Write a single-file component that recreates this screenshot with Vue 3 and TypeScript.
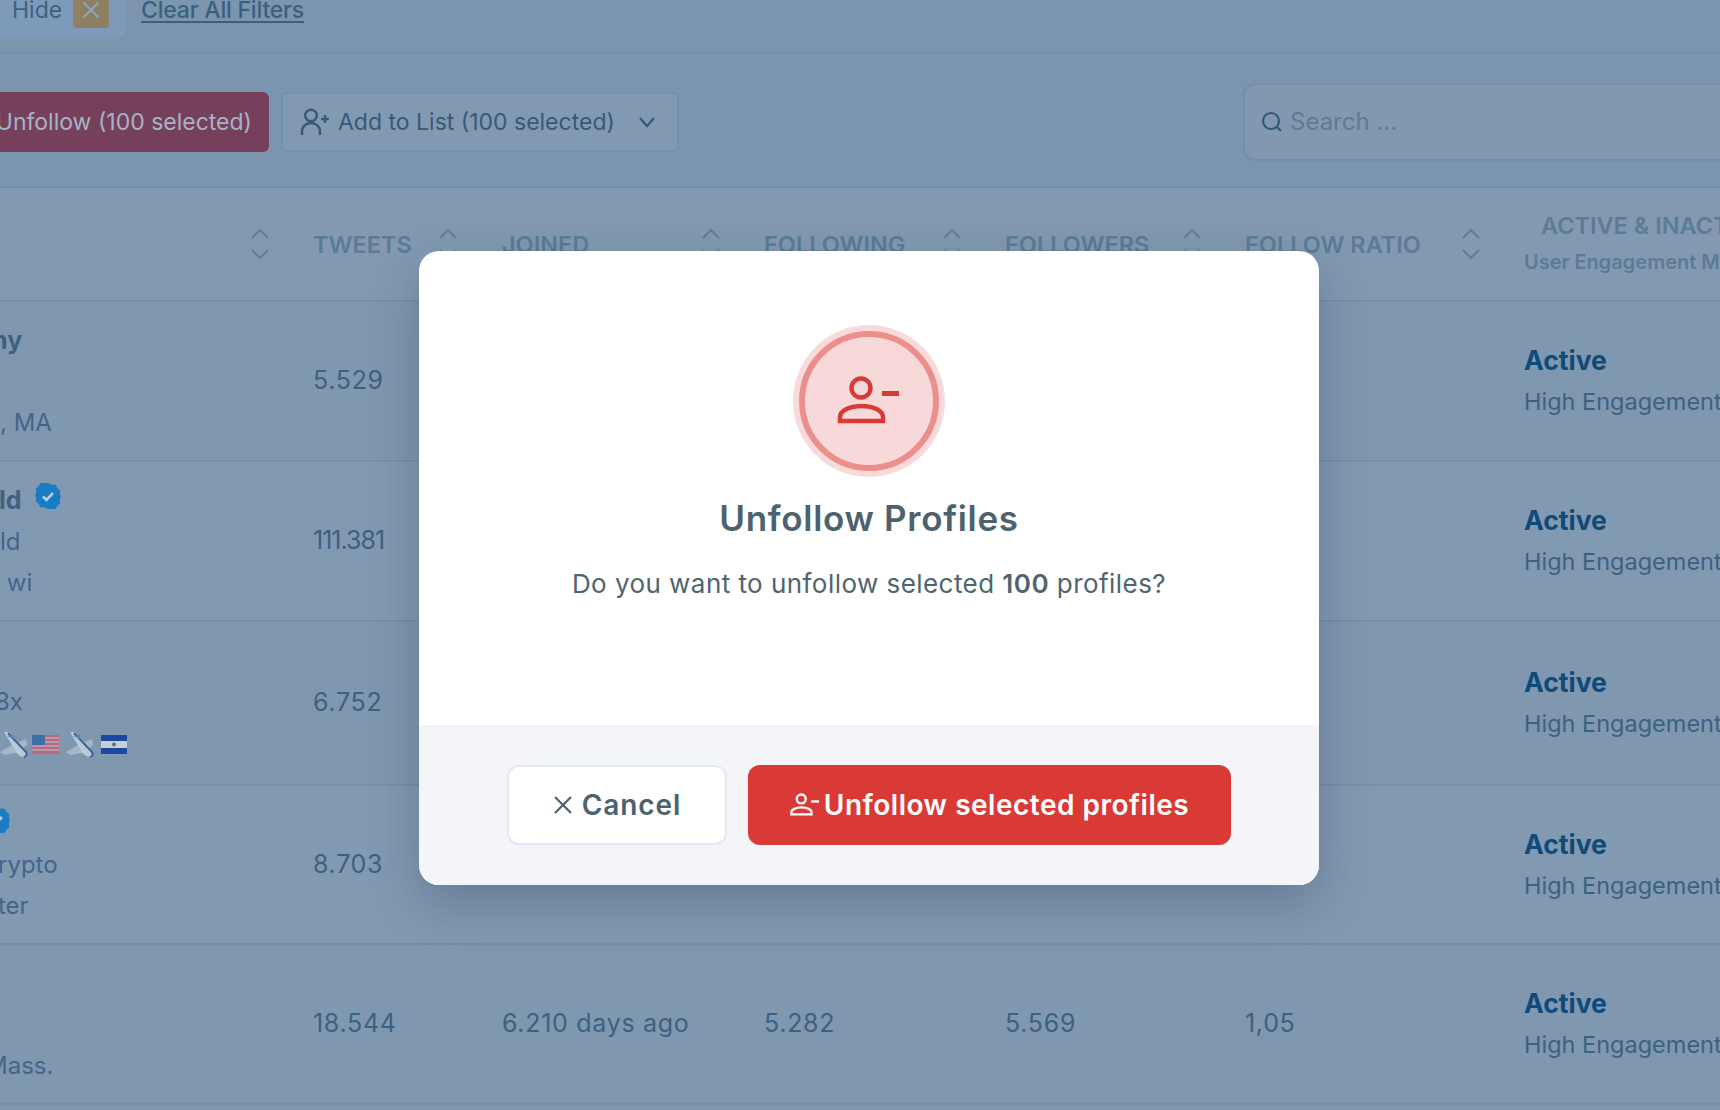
<script setup lang="ts">
interface Row {
  height: number;
  name: string;
  nameShift?: number;
  badge?: boolean;
  handle: string;
  bio: string;
  shift?: number;
  flags?: boolean;
  tweets: string;
  tracking?: number;
  joined?: string;
  following?: string;
  followers?: string;
  ratio?: string;
}

const headers = [
  { label: 'TWEETS', width: 189, sort: 125 },
  { label: 'JOINED', width: 262, sort: 199 },
  { label: 'FOLLOWING', width: 241, sort: 178 },
  { label: 'FOLLOWERS', width: 240, sort: 177 },
  { label: 'FOLLOW RATIO', width: 279, sort: 216 }
];

const rows: Row[] = [
  { height: 160, name: 'ny', nameShift: -8, handle: '', bio: ', MA', tweets: '5.529' },
  { height: 160, name: 'ld', badge: true, handle: 'ld', bio: ' wi', tweets: '111.381', tracking: -1 },
  { height: 164, name: '', handle: '8x', bio: '', shift: -5, flags: true, tweets: '6.752' },
  { height: 159, name: '', badge: true, handle: 'rypto', bio: 'ter', shift: -2, tweets: '8.703' },
  {
    height: 160,
    name: '',
    handle: '',
    bio: 'Mass.',
    shift: -14,
    tweets: '18.544',
    joined: '6.210 days ago',
    following: '5.282',
    followers: '5.569',
    ratio: '1,05'
  }
];
</script>

<template>
  <div class="page">
    <div class="filters">
      <div class="chip">
        <span class="chip-label">Hide</span>
        <span class="chip-close">
          <svg width="18" height="18" viewBox="0 0 18 18" fill="none" stroke="currentColor" stroke-width="2">
            <path d="M1.500 1.500l15 15M16.500 1.500l-15 15" />
          </svg>
        </span>
      </div>
      <a class="clear">Clear All Filters</a>
    </div>

    <div class="toolbar">
      <button class="btn-red">Unfollow (100 selected)</button>
      <button class="btn-list">
        <svg width="30" height="28" viewBox="0 0 30 28" fill="none" stroke="currentColor" stroke-width="2.400">
          <circle cx="11" cy="7.500" r="5.800" />
          <path d="M2 27v-3.500c0-5 4-8.500 9-8.500s9 3.500 9 8.500V27M21 11h8M25 7v8" />
        </svg>
        <span>Add to List (100 selected)</span>
        <svg class="chevron" width="18" height="12" viewBox="0 0 18 12" fill="none" stroke="currentColor" stroke-width="2.200">
          <path d="M2 2l7 8 7-8" />
        </svg>
      </button>
      <div class="search">
        <svg width="22" height="22" viewBox="0 0 22 22" fill="none" stroke="#2f5a7c" stroke-width="2.200">
          <circle cx="10" cy="10" r="8" />
          <path d="M16 16l4 4" />
        </svg>
        <span>Search ...</span>
      </div>
    </div>

    <div class="table-head">
      <div class="name-col">
        <svg class="sort" width="20" height="30" viewBox="0 0 20 30" fill="none" stroke="currentColor" stroke-width="2">
          <path d="M2 9l8-8 8 8M2 21l8 8 8-8" />
        </svg>
      </div>
      <div v-for="h in headers" :key="h.label" class="head-cell" :style="{ width: h.width + 'px' }">
        <span>{{ h.label }}</span>
        <svg class="sort" :style="{ left: h.sort + 'px' }" width="20" height="30" viewBox="0 0 20 30" fill="none" stroke="currentColor" stroke-width="2">
          <path d="M2 9l8-8 8 8M2 21l8 8 8-8" />
        </svg>
      </div>
      <div class="head-active">
        <div class="head-active-title">ACTIVE &amp; INACTIVE</div>
        <div class="head-active-sub">User Engagement Metrics</div>
      </div>
    </div>

    <div v-for="(row, i) in rows" :key="i" class="row" :class="{ alt: i % 2 === 0 }" :style="{ height: row.height + 'px' }">
      <div class="name-col name-cell">
        <div class="line strong">
          <svg v-if="row.badge" class="badge" :class="{ 'badge-left': !row.name }" width="26" height="26" viewBox="0 0 26 26">
            <path fill="#1a7cc4" d="M13 0l3.500 1.800 3.900-.3 2 3.400 3 2.500-.6 3.900L26 13l-1.200 3.400.6 3.900-3 2.500-2 3.400-3.900-.3L13 26l-3.500-1.800-3.900.3-2-3.400-3-2.500.6-3.900L0 13l1.200-3.400-.6-3.900 3-2.500 2-3.400 3.900.3z" />
            <path d="M8 13.500l3.500 3.500 6.500-7" fill="none" stroke="#b9cfe2" stroke-width="2.600" />
          </svg>
          <span v-if="row.name" class="name-text" :style="{ marginLeft: (row.nameShift ?? -1) + 'px' }">{{ row.name }}</span>
        </div>
        <div class="line muted" :style="{ marginLeft: (row.shift ?? 0) + 'px' }">{{ row.handle }}</div>
        <div v-if="row.flags" class="line flags">
          <svg width="127" height="28" viewBox="0 -1 127 28">
            <defs>
              <g id="plane">
                <path d="M0 21l14-8 12-5 1 6-11 8-12 2z" fill="#a6b6c6" />
                <path d="M4 1h5l17 19q2 5-1 6-6 0-9-5z" fill="#bcc9d6" />
                <path d="M8 2l18 19q2 4-2 5" fill="none" stroke="#3b6296" stroke-width="2" />
                <path d="M7 5l7-1v4z" fill="#5d83ab" />
              </g>
            </defs>
            <use href="#plane" />
            <use href="#plane" x="66" />
            <rect x="32" y="4" width="27" height="19" fill="#b56a80" />
            <path d="M32 7h27M32 11h27M32 15h27M32 19h27" stroke="#bcc6d2" stroke-width="1.200" />
            <rect x="32" y="4" width="13" height="10" fill="#3d6ea5" />
            <rect x="101" y="4" width="26" height="6" fill="#1d47a0" />
            <rect x="101" y="10" width="26" height="7" fill="#c5d0da" />
            <rect x="101" y="17" width="26" height="6" fill="#1d47a0" />
            <circle cx="114" cy="13.500" r="2" fill="#5a7a55" />
          </svg>
        </div>
        <div v-else class="line muted" :style="{ marginLeft: (row.shift ?? 0) + 'px' }">{{ row.bio }}</div>
      </div>
      <div class="cell" :style="{ width: headers[0].width + 'px', letterSpacing: (row.tracking ?? 0.7) + 'px' }">{{ row.tweets }}</div>
      <div class="cell" :style="{ width: headers[1].width + 'px' }">{{ row.joined }}</div>
      <div class="cell" :style="{ width: headers[2].width + 'px' }">{{ row.following }}</div>
      <div class="cell" :style="{ width: headers[3].width + 'px' }">{{ row.followers }}</div>
      <div class="cell" :style="{ width: headers[4].width + 'px' }">{{ row.ratio }}</div>
      <div class="status">
        <div class="status-title">Active</div>
        <div class="status-sub">High Engagement</div>
      </div>
    </div>

    <div class="overlay">
      <div class="modal">
        <div class="modal-body">
          <div class="icon-ring">
            <svg width="64" height="52" viewBox="0 0 64 52" fill="none" stroke="#d93a35" stroke-width="4.400">
              <circle cx="24" cy="13" r="9.500" />
              <path d="M3 46v-4c0-6 9-11 21.500-11S46 36 46 42v4z" />
              <rect x="45" y="16" width="17" height="5" fill="#d93a35" stroke="none" />
            </svg>
          </div>
          <h2 class="modal-title">Unfollow Profiles</h2>
          <p class="modal-text">Do you want to unfollow selected <b>100</b> profiles?</p>
        </div>
        <div class="modal-footer">
          <button class="btn-cancel">
            <svg width="20" height="20" viewBox="0 0 20 20" fill="none" stroke="currentColor" stroke-width="2.200">
              <path d="M2 2l16 16M18 2L2 18" />
            </svg>
            Cancel
          </button>
          <button class="btn-confirm">
            <svg width="30" height="26" viewBox="0 0 64 52" fill="none" stroke="#fff" stroke-width="5">
              <circle cx="24" cy="13" r="9.500" />
              <path d="M3 46v-4c0-6 9-11 21.500-11S46 36 46 42v4z" />
              <rect x="45" y="16" width="17" height="5" fill="#fff" stroke="none" />
            </svg>
            Unfollow selected profiles
          </button>
        </div>
      </div>
    </div>
  </div>
</template>

<style>
html,
body {
  margin: 0;
  background: #7e96ae;
}
</style>

<style scoped>
* {
  box-sizing: border-box;
}

.page {
  position: relative;
  width: 1720px;
  height: 1110px;
  overflow: hidden;
  font-family: Inter, "Noto Sans", sans-serif;
  font-size: 24px;
  color: #3d6180;
  background: #7e96ae;
}

.filters {
  height: 54px;
  display: flex;
  align-items: flex-end;
  gap: 16px;
  padding-bottom: 16px;
  background: #7b95ae;
  border-bottom: 2px solid #7290aa;
  font-size: 23px;
}

.chip {
  height: 60px;
  width: 125px;
  flex: none;
  display: flex;
  align-items: flex-end;
  justify-content: space-between;
  padding: 0 16px 8px 12px;
  background: #7d9abb;
  border-radius: 0 6px 6px 0;
  color: #3f6080;
}

.chip-label {
  line-height: 30px;
  margin-bottom: 3px;
}

.chip-close {
  width: 36px;
  height: 36px;
  flex: none;
  display: flex;
  align-items: center;
  justify-content: center;
  background: #8f7f63;
  border-radius: 4px;
  color: #8ba6c0;
}

.clear {
  margin-bottom: 11px;
  color: #3a5f80;
  font-weight: 500;
  letter-spacing: -0.2px;
  text-decoration: underline;
  text-decoration-thickness: 2px;
  text-underline-offset: 3px;
  line-height: 30px;
}

.toolbar {
  height: 134px;
  display: flex;
  align-items: center;
  gap: 12px;
  padding-top: 3px;
  background: #7b95ae;
  border-bottom: 2px solid #7290aa;
  font-size: 23px;
}

.btn-red,
.btn-list {
  height: 60px;
  border-radius: 6px;
  font: inherit;
  display: flex;
  align-items: center;
  white-space: nowrap;
}

.btn-red {
  width: 299px;
  margin-left: -30px;
  flex: none;
  justify-content: flex-end;
  padding: 0 17px 0 0;
  border: none;
  background: #77405a;
  color: #a5b3c8;
}

.btn-list {
  width: 398px;
  flex: none;
  gap: 8px;
  padding: 0 21px 0 17px;
  border: 2px solid #7390ac;
  background: #8199b1;
  color: #36597a;
}

.chevron {
  margin-left: auto;
}

.search {
  width: 600px;
  height: 78px;
  margin-left: 552px;
  flex: none;
  display: flex;
  align-items: center;
  gap: 7px;
  padding-left: 16px;
  border: 2px solid #748fab;
  border-radius: 12px;
  background: #8198b0;
  color: #5f7a93;
  font-size: 24px;
}

.table-head {
  height: 114px;
  display: flex;
  align-items: center;
  background: #8299b1;
  border-bottom: 2px solid #7290aa;
  color: #5b7b96;
  font-size: 23.500px;
  font-weight: 600;
}

.name-col {
  position: relative;
  width: 313px;
  flex: none;
}

.sort {
  position: absolute;
  top: 50%;
  margin-top: -15px;
  color: #5e7e9a;
}

.name-col > .sort {
  left: 250px;
}

.head-cell {
  position: relative;
  flex: none;
  height: 40px;
  display: flex;
  align-items: center;
  white-space: nowrap;
}

.head-active {
  white-space: nowrap;
}

.head-active-title {
  padding-left: 17px;
  line-height: 36px;
}

.head-active-sub {
  font-size: 20px;
  line-height: 36px;
}

.row {
  display: flex;
  align-items: center;
  background: #8299b2;
  border-bottom: 2px solid #7290aa;
}

.row.alt {
  background: #7f97af;
}

.name-cell {
  display: flex;
  flex-direction: column;
}

.line {
  height: 41px;
  display: flex;
  align-items: center;
  white-space: pre;
}

.strong {
  font-weight: 700;
  font-size: 25px;
  color: #3f617e;
}

.name-text {
  margin-right: 13px;
}

.badge {
  order: 1;
  margin-top: -8px;
}

.badge-left {
  margin-left: -16px;
}

.muted {
  color: #43658a;
}

.flags {
  height: 44px;
}

.cell {
  flex: none;
  font-size: 25px;
  letter-spacing: 0.7px;
  white-space: nowrap;
  margin-top: -2px;
}

.status {
  white-space: nowrap;
}

.status-title {
  font-size: 26.500px;
  font-weight: 700;
  line-height: 42px;
  color: #0e4a7a;
}

.status-sub {
  font-size: 23.500px;
  line-height: 42px;
  color: #3d6180;
}

.overlay {
  position: absolute;
  inset: 0;
  display: flex;
  align-items: center;
  justify-content: center;
  padding: 26px 0 0 18px;
}

.modal {
  width: 900px;
  height: 634px;
  display: flex;
  flex-direction: column;
  border-radius: 20px;
  overflow: hidden;
  background: #fff;
  box-shadow: 0 20px 50px rgba(30, 50, 75, 0.28);
}

.modal-body {
  flex: 1;
  display: flex;
  flex-direction: column;
  align-items: center;
  padding-top: 80px;
}

.icon-ring {
  width: 140px;
  height: 140px;
  display: flex;
  align-items: center;
  justify-content: center;
  border: 6px solid #ec8f8c;
  border-radius: 50%;
  background: #f8d9d9;
  box-shadow: 0 0 0 6px #f9dada;
}

.modal-title {
  margin: 27px 0 0;
  font-size: 35px;
  letter-spacing: 0.7px;
  line-height: 40px;
  font-weight: 600;
  color: #4c636e;
}

.modal-text {
  margin: 26px 0 0;
  font-size: 26px;
  letter-spacing: 0.45px;
  line-height: 40px;
  color: #4e6570;
}

.modal-text b {
  font-weight: 600;
}

.modal-footer {
  height: 160px;
  flex: none;
  display: flex;
  align-items: center;
  justify-content: center;
  gap: 21px;
  background: #f4f5f9;
}

.btn-cancel,
.btn-confirm {
  height: 80px;
  display: flex;
  align-items: center;
  justify-content: center;
  gap: 9px;
  border-radius: 12px;
  font: inherit;
  font-size: 28px;
  font-weight: 600;
  letter-spacing: 0.5px;
}

.btn-cancel {
  width: 220px;
  border: 2px solid #e5e8f2;
  background: #fff;
  color: #4c636e;
  letter-spacing: 0.9px;
}

.btn-confirm {
  width: 483px;
  gap: 4px;
  border: none;
  background: #d93a35;
  color: #fff;
}
</style>
